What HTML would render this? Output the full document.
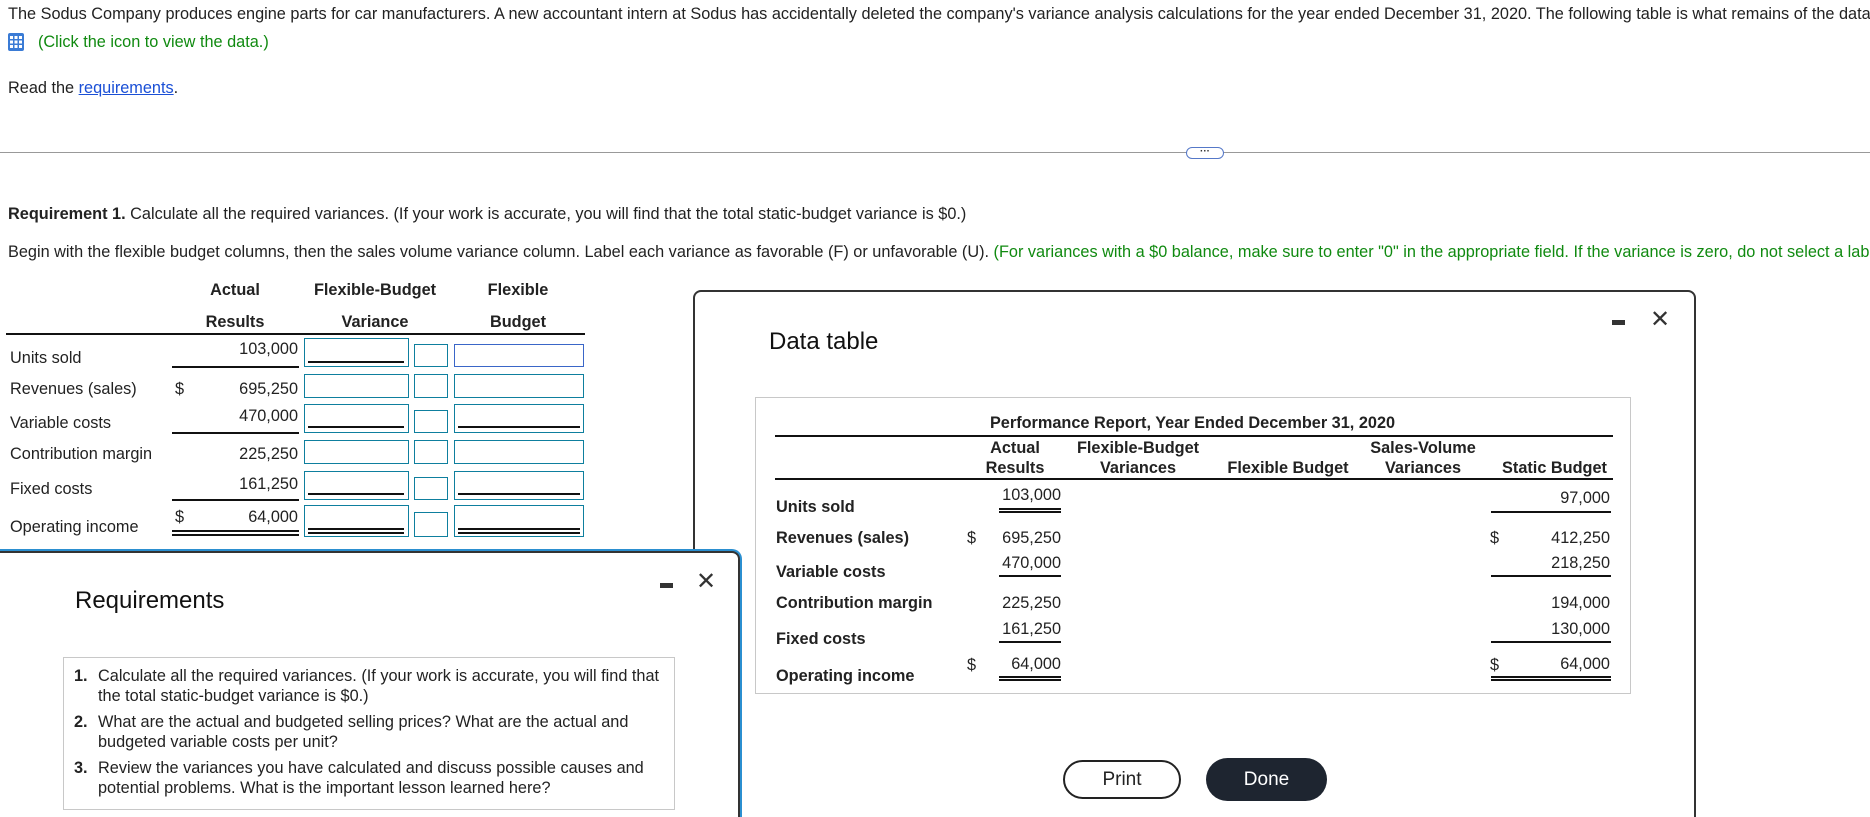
<!DOCTYPE html>
<html style="width:1870px;height:817px;overflow:hidden"><head><meta charset="utf-8"><style>
*{margin:0;padding:0;box-sizing:border-box}
body{width:1870px;height:817px;overflow:hidden;background:#fff;font-family:"Liberation Sans",Arial,sans-serif;font-size:16.3px;color:#222;position:relative}
.a{position:absolute;white-space:nowrap}
.b{font-weight:bold}
.r{text-align:right}
.c{text-align:center}
.in{position:absolute;border:1.5px solid #0e7f9e;background:#fff}
.ul{position:absolute;border-bottom:2px solid #111}
.dl{position:absolute;border-top:2px solid #111;border-bottom:2px solid #111;height:6px}
</style></head><body>
<div class="a" style="left:8px;top:5px">The Sodus Company produces engine parts for car manufacturers. A new accountant intern at Sodus has accidentally deleted the company's variance analysis calculations for the year ended December 31, 2020. The following table is what remains of the data</div>
<svg class="a" style="left:8px;top:33px" width="16" height="18" viewBox="0 0 16 18"><rect x="0" y="0" width="16" height="18" rx="2" fill="#3a7bd5"/><g fill="#fff"><rect x="2" y="3" width="3" height="3"/><rect x="6.5" y="3" width="3" height="3"/><rect x="11" y="3" width="3" height="3"/><rect x="2" y="7.5" width="3" height="3"/><rect x="6.5" y="7.5" width="3" height="3"/><rect x="11" y="7.5" width="3" height="3"/><rect x="2" y="12" width="3" height="3"/><rect x="6.5" y="12" width="3" height="3"/><rect x="11" y="12" width="3" height="3"/></g></svg>
<div class="a" style="left:38px;top:33px;color:#108a10">(Click the icon to view the data.)</div>
<div class="a" style="left:8px;top:79px">Read the <span style="color:#1a4fd6;text-decoration:underline">requirements</span>.</div>
<div class="a" style="left:0;top:152px;width:1870px;border-top:1.5px solid #999"></div>
<div class="a" style="left:1186px;top:147px;width:38px;height:12px;border:1px solid #5578c8;border-radius:6px;background:#fff;font-size:10px;line-height:7px;text-align:center;color:#333;font-weight:bold">···</div>
<div class="a" style="left:8px;top:205px"><b>Requirement 1.</b> Calculate all the required variances. (If your work is accurate, you will find that the total static-budget variance is $0.)</div>
<div class="a" style="left:8px;top:243px">Begin with the flexible budget columns, then the sales volume variance column. Label each variance as favorable (F) or unfavorable (U). <span style="color:#108a10">(For variances with a $0 balance, make sure to enter "0" in the appropriate field. If the variance is zero, do not select a label</span></div>

<div class="a b c" style="left:195px;top:281px;width:80px">Actual</div>
<div class="a b c" style="left:295px;top:281px;width:160px">Flexible-Budget</div>
<div class="a b c" style="left:470px;top:281px;width:96px">Flexible</div>
<div class="a b c" style="left:195px;top:313px;width:80px">Results</div>
<div class="a b c" style="left:295px;top:313px;width:160px">Variance</div>
<div class="a b c" style="left:470px;top:313px;width:96px">Budget</div>
<div class="a" style="left:6px;top:333px;width:579px;border-top:2px solid #111"></div>

<div class="a" style="left:10px;top:349px">Units sold</div>
<div class="a" style="left:10px;top:380px">Revenues (sales)</div>
<div class="a" style="left:10px;top:414px">Variable costs</div>
<div class="a" style="left:10px;top:445px">Contribution margin</div>
<div class="a" style="left:10px;top:480px">Fixed costs</div>
<div class="a" style="left:10px;top:518px">Operating income</div>
<div class="a" style="left:175px;top:380px">$</div>
<div class="a" style="left:175px;top:508px">$</div>
<div class="a r" style="left:200px;top:340px;width:98px">103,000</div>
<div class="a r" style="left:200px;top:380px;width:98px">695,250</div>
<div class="a r" style="left:200px;top:407px;width:98px">470,000</div>
<div class="a r" style="left:200px;top:445px;width:98px">225,250</div>
<div class="a r" style="left:200px;top:475px;width:98px">161,250</div>
<div class="a r" style="left:200px;top:508px;width:98px">64,000</div>
<div class="ul" style="left:172px;top:366px;width:127px"></div>
<div class="ul" style="left:172px;top:432px;width:127px"></div>
<div class="ul" style="left:172px;top:499px;width:127px"></div>
<div class="dl" style="left:172px;top:530px;width:127px"></div>

<div class="in" style="left:304px;top:338px;width:105px;height:29px"></div><div class="ul" style="left:308px;top:361px;width:96px"></div>
<div class="in" style="left:414px;top:344px;width:34px;height:23px"></div>
<div class="in" style="left:454px;top:344px;width:130px;height:23px;border-color:#3a66c8"></div>
<div class="in" style="left:304px;top:374px;width:105px;height:24px"></div>
<div class="in" style="left:414px;top:374px;width:34px;height:24px"></div>
<div class="in" style="left:454px;top:374px;width:130px;height:24px"></div>
<div class="in" style="left:304px;top:404px;width:105px;height:29px"></div><div class="ul" style="left:308px;top:426px;width:96px"></div>
<div class="in" style="left:414px;top:410px;width:34px;height:23px"></div>
<div class="in" style="left:454px;top:404px;width:130px;height:29px"></div><div class="ul" style="left:458px;top:426px;width:122px"></div>
<div class="in" style="left:304px;top:440px;width:105px;height:24px"></div>
<div class="in" style="left:414px;top:440px;width:34px;height:24px"></div>
<div class="in" style="left:454px;top:440px;width:130px;height:24px"></div>
<div class="in" style="left:304px;top:471px;width:105px;height:29px"></div><div class="ul" style="left:308px;top:493px;width:96px"></div>
<div class="in" style="left:414px;top:477px;width:34px;height:23px"></div>
<div class="in" style="left:454px;top:471px;width:130px;height:29px"></div><div class="ul" style="left:458px;top:493px;width:122px"></div>
<div class="in" style="left:304px;top:505px;width:105px;height:32px"></div><div class="dl" style="left:308px;top:528px;width:96px"></div>
<div class="in" style="left:414px;top:512px;width:34px;height:25px"></div>
<div class="in" style="left:454px;top:505px;width:130px;height:32px"></div><div class="dl" style="left:458px;top:528px;width:122px"></div>

<!-- Data table modal -->
<div class="a" style="left:693px;top:290px;width:1003px;height:527px;border:2px solid #333;border-bottom:none;border-radius:8px 8px 0 0;background:#fff"></div>
<div class="a" style="left:769px;top:328px;font-size:24px;color:#111">Data table</div>
<div class="a" style="left:1612px;top:320px;width:13px;height:5px;background:#333"></div>
<div class="a" style="left:1650px;top:305px;font-size:24px;color:#333">✕</div>
<div class="a" style="left:755px;top:397px;width:876px;height:297px;border:1.5px solid #c8c8c8"></div>
<div class="a b c" style="left:900px;top:414px;width:585px">Performance Report, Year Ended December 31, 2020</div>
<div class="a" style="left:775px;top:435px;width:838px;border-top:2px solid #111"></div>
<div class="a b c" style="left:965px;top:438px;width:100px;line-height:20px">Actual<br>Results</div>
<div class="a b c" style="left:1068px;top:438px;width:140px;line-height:20px">Flexible-Budget<br>Variances</div>
<div class="a b c" style="left:1218px;top:458px;width:140px;line-height:20px">Flexible Budget</div>
<div class="a b c" style="left:1363px;top:438px;width:120px;line-height:20px">Sales-Volume<br>Variances</div>
<div class="a b c" style="left:1492px;top:458px;width:125px;line-height:20px">Static Budget</div>
<div class="a" style="left:775px;top:478px;width:838px;border-top:2px solid #111"></div>
<div class="a b" style="left:776px;top:498px">Units sold</div>
<div class="a b" style="left:776px;top:529px">Revenues (sales)</div>
<div class="a b" style="left:776px;top:563px">Variable costs</div>
<div class="a b" style="left:776px;top:594px">Contribution margin</div>
<div class="a b" style="left:776px;top:630px">Fixed costs</div>
<div class="a b" style="left:776px;top:667px">Operating income</div>
<div class="a" style="left:967px;top:529px">$</div><div class="a" style="left:967px;top:656px">$</div>
<div class="a" style="left:1490px;top:529px">$</div><div class="a" style="left:1490px;top:656px">$</div>
<div class="a r" style="left:960px;top:486px;width:101px">103,000</div>
<div class="a r" style="left:960px;top:529px;width:101px">695,250</div>
<div class="a r" style="left:960px;top:554px;width:101px">470,000</div>
<div class="a r" style="left:960px;top:594px;width:101px">225,250</div>
<div class="a r" style="left:960px;top:620px;width:101px">161,250</div>
<div class="a r" style="left:960px;top:655px;width:101px">64,000</div>
<div class="a r" style="left:1500px;top:489px;width:110px">97,000</div>
<div class="a r" style="left:1500px;top:529px;width:110px">412,250</div>
<div class="a r" style="left:1500px;top:554px;width:110px">218,250</div>
<div class="a r" style="left:1500px;top:594px;width:110px">194,000</div>
<div class="a r" style="left:1500px;top:620px;width:110px">130,000</div>
<div class="a r" style="left:1500px;top:655px;width:110px">64,000</div>
<div class="dl" style="left:999px;top:508px;width:62px;height:5px"></div>
<div class="ul" style="left:999px;top:575px;width:62px"></div>
<div class="ul" style="left:999px;top:641px;width:62px"></div>
<div class="dl" style="left:999px;top:676px;width:62px;height:5px"></div>
<div class="ul" style="left:1491px;top:511px;width:120px"></div>
<div class="ul" style="left:1491px;top:575px;width:120px"></div>
<div class="ul" style="left:1491px;top:641px;width:120px"></div>
<div class="dl" style="left:1491px;top:676px;width:120px;height:5px"></div>
<div class="a c" style="left:1063px;top:760px;width:118px;height:39px;border:2px solid #222;border-radius:20px;line-height:35px;font-size:19px;color:#222">Print</div>
<div class="a c" style="left:1206px;top:758px;width:121px;height:43px;background:#1e2530;border-radius:22px;line-height:43px;font-size:19px;color:#fff">Done</div>

<!-- Requirements modal -->
<div class="a" style="left:-10px;top:549px;width:752px;height:268px;border:3px solid #2b8fd0;border-bottom:none;border-radius:10px 10px 0 0;background:#fff"></div>
<div class="a" style="left:-8px;top:551px;width:748px;height:266px;border:2px solid #333;border-bottom:none;border-radius:8px 8px 0 0"></div>
<div class="a" style="left:75px;top:587px;font-size:24px;color:#111">Requirements</div>
<div class="a" style="left:660px;top:583px;width:13px;height:5px;background:#333"></div>
<div class="a" style="left:696px;top:567px;font-size:24px;color:#333">✕</div>
<div class="a" style="left:63px;top:657px;width:612px;height:153px;border:1.5px solid #c8c8c8"></div>
<div class="a" style="left:74px;top:667px;line-height:19.5px;white-space:normal;width:595px">
<div style="position:relative;padding-left:24px;margin-bottom:7px"><b style="position:absolute;left:0">1.</b>Calculate all the required variances. (If your work is accurate, you will find that the total static-budget variance is $0.)</div>
<div style="position:relative;padding-left:24px;margin-bottom:7px;width:560px"><b style="position:absolute;left:0">2.</b>What are the actual and budgeted selling prices? What are the actual and budgeted variable costs per unit?</div>
<div style="position:relative;padding-left:24px;width:580px"><b style="position:absolute;left:0">3.</b>Review the variances you have calculated and discuss possible causes and potential problems. What is the important lesson learned here?</div>
</div>
</body></html>
